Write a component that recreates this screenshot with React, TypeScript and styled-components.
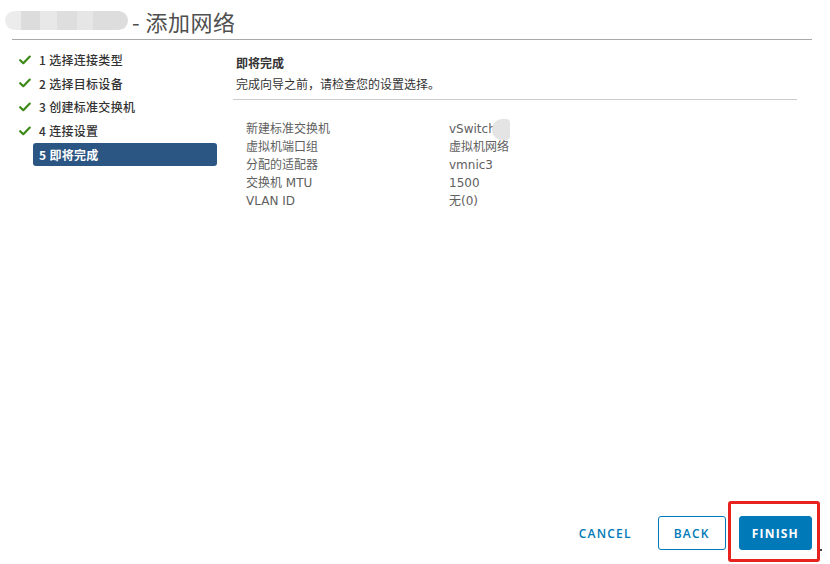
import React from "react";
import styled, { createGlobalStyle } from "styled-components";

const Global = createGlobalStyle`
  html, body { margin: 0; padding: 0; background: #fff; }
  body {
    font-family: "Open Sans", "Noto Sans CJK SC", sans-serif;
    color: #565656;
  }
  * { box-sizing: border-box; }
`;

const Page = styled.div`
  width: 830px;
  height: 564px;
  display: flex;
  flex-direction: column;
  background: #fff;
`;

const Header = styled.header`
  height: 39px;
  display: flex;
  align-items: center;
  padding-left: 5px;
  padding-top: 2px;
`;

const Redacted = styled.span`
  display: inline-block;
  width: 123px;
  height: 19px;
  border-radius: 10px;
  background: linear-gradient(
    90deg,
    #ececec 0px,
    #ececec 16px,
    #dcdcdc 16px,
    #dcdcdc 35px,
    #e8e8e8 35px,
    #e8e8e8 52px,
    #dedede 52px,
    #dedede 72px,
    #e6e6e6 72px,
    #e6e6e6 88px,
    #dddddd 88px,
    #dddddd 123px
  );
  filter: blur(0.6px);
`;

const Title = styled.h1`
  margin: 0 0 0 4px;
  font-family: "Noto Sans CJK SC", "Open Sans", sans-serif;
  font-size: 22px;
  font-weight: 400;
  color: #4f4f4f;
  line-height: 28px;
  letter-spacing: 0.5px;
`;

const Rule = styled.div`
  height: 1px;
  margin: 0 18px 0 12px;
  background: #a8a8a8;
`;

const Body = styled.div`
  flex: 1;
  display: flex;
  min-height: 0;
`;

const Nav = styled.ol`
  list-style: none;
  margin: 0;
  padding: 8px 0 0 19px;
  width: 217px;
  flex: none;
`;

const NavItem = styled.li`
  display: flex;
  align-items: center;
  height: 23.6px;
`;

const IconSlot = styled.span`
  width: 14px;
  flex: none;
  display: flex;
  align-items: center;
  justify-content: flex-start;
`;

const NavLabel = styled.span<{ $active?: boolean }>`
  flex: 1;
  height: 23px;
  display: flex;
  align-items: center;
  padding: 0 6px;
  border-radius: 3px;
  font-family: "Noto Sans CJK SC", "Open Sans", sans-serif;
  font-size: 12px;
  font-weight: ${(p) => (p.$active ? 700 : 500)};
  letter-spacing: 0.3px;
  color: ${(p) => (p.$active ? "#ffffff" : "#333333")};
  background: ${(p) => (p.$active ? "#2b5583" : "transparent")};
`;

const Content = styled.section`
  flex: none;
  width: 564px;
  margin-left: 16px;
  padding-top: 14px;
`;

const StepTitle = styled.h2`
  margin: 0 0 3px 3px;
  font-family: "Noto Sans CJK SC", "Open Sans", sans-serif;
  font-size: 12px;
  font-weight: 700;
  line-height: 18px;
  color: #333;
`;

const StepDesc = styled.p`
  margin: 0 0 6px 3px;
  font-family: "Noto Sans CJK SC", "Open Sans", sans-serif;
  font-size: 12px;
  line-height: 18px;
  color: #333;
`;

const Divider = styled.div`
  height: 1px;
  background: #cccccc;
`;

const Details = styled.dl`
  margin: 21px 0 0 13px;
  display: grid;
  grid-template-columns: 203px auto;
  grid-auto-rows: 17.9px;
  align-items: center;
  font-family: "DejaVu Sans", "Noto Sans CJK SC", sans-serif;
  font-size: 12px;
  font-weight: 400;
  color: #606060;
`;

const Term = styled.dt`
  margin: 0;
  line-height: 17.9px;
  white-space: nowrap;
`;

const Value = styled.dd`
  margin: 0;
  line-height: 17.9px;
  white-space: nowrap;
  display: flex;
  align-items: center;
`;

const BlurDot = styled.span`
  display: inline-block;
  width: 18px;
  height: 21px;
  margin-left: -4px;
  border-radius: 10px 4px 4px 10px;
  background: #e4e4e4;
  filter: blur(0.5px);
`;

const Footer = styled.footer`
  display: flex;
  justify-content: flex-end;
  align-items: center;
  gap: 13px;
  padding: 0 18px 14px 0;
`;

const Button = styled.button<{ $variant: "flat" | "outline" | "solid" }>`
  height: 34px;
  min-width: ${(p) => (p.$variant === "outline" ? "68px" : "auto")};
  padding: 0 12px;
  border-radius: 3px;
  font-family: "Open Sans", "Noto Sans", sans-serif;
  font-size: 12px;
  font-weight: ${(p) => (p.$variant === "solid" ? 700 : 600)};
  letter-spacing: 1.2px;
  cursor: pointer;
  border: 1px solid
    ${(p) => (p.$variant === "flat" ? "transparent" : "#0079b8")};
  background: ${(p) => (p.$variant === "solid" ? "#0079b8" : "#fff")};
  color: ${(p) => (p.$variant === "solid" ? "#ffffff" : "#0079b8")};
`;

const Highlight = styled.div`
  position: relative;
  display: flex;
  &::after {
    content: "";
    position: absolute;
    top: -15px;
    bottom: -12px;
    left: -11px;
    right: -8px;
    border: 3px solid #e8231f;
    border-radius: 3px;
    pointer-events: none;
  }
  &::before {
    content: "";
    position: absolute;
    right: -10px;
    bottom: -1px;
    width: 2px;
    height: 2px;
    background: #444;
  }
`;

const Check = () => (
  <svg width="12" height="10" viewBox="0 0 12 10" aria-hidden="true">
    <path
      d="M1.2 5.2 L4.3 8.2 L10.8 1.6"
      fill="none"
      stroke="#3b8a17"
      strokeWidth="2.2"
      strokeLinecap="round"
      strokeLinejoin="round"
    />
  </svg>
);

const steps = [
  { label: "1 选择连接类型", done: true },
  { label: "2 选择目标设备", done: true },
  { label: "3 创建标准交换机", done: true },
  { label: "4 连接设置", done: true },
  { label: "5 即将完成", done: false, active: true },
];

const details: { term: string; value: string; blur?: boolean }[] = [
  { term: "新建标准交换机", value: "vSwitch", blur: true },
  { term: "虚拟机端口组", value: "虚拟机网络" },
  { term: "分配的适配器", value: "vmnic3" },
  { term: "交换机 MTU", value: "1500" },
  { term: "VLAN ID", value: "无(0)" },
];

export default function App() {
  return (
    <Page>
      <Global />
      <Header>
        <Redacted />
        <Title>- 添加网络</Title>
      </Header>
      <Rule />
      <Body>
        <Nav>
          {steps.map((s) => (
            <NavItem key={s.label}>
              <IconSlot>{s.done ? <Check /> : null}</IconSlot>
              <NavLabel $active={s.active}>{s.label}</NavLabel>
            </NavItem>
          ))}
        </Nav>
        <Content>
          <StepTitle>即将完成</StepTitle>
          <StepDesc>完成向导之前，请检查您的设置选择。</StepDesc>
          <Divider />
          <Details>
            {details.map((d) => (
              <React.Fragment key={d.term}>
                <Term>{d.term}</Term>
                <Value>
                  {d.value}
                  {d.blur ? <BlurDot /> : null}
                </Value>
              </React.Fragment>
            ))}
          </Details>
        </Content>
      </Body>
      <Footer>
        <Button $variant="flat">CANCEL</Button>
        <Button $variant="outline">BACK</Button>
        <Highlight>
          <Button $variant="solid">FINISH</Button>
        </Highlight>
      </Footer>
    </Page>
  );
}
